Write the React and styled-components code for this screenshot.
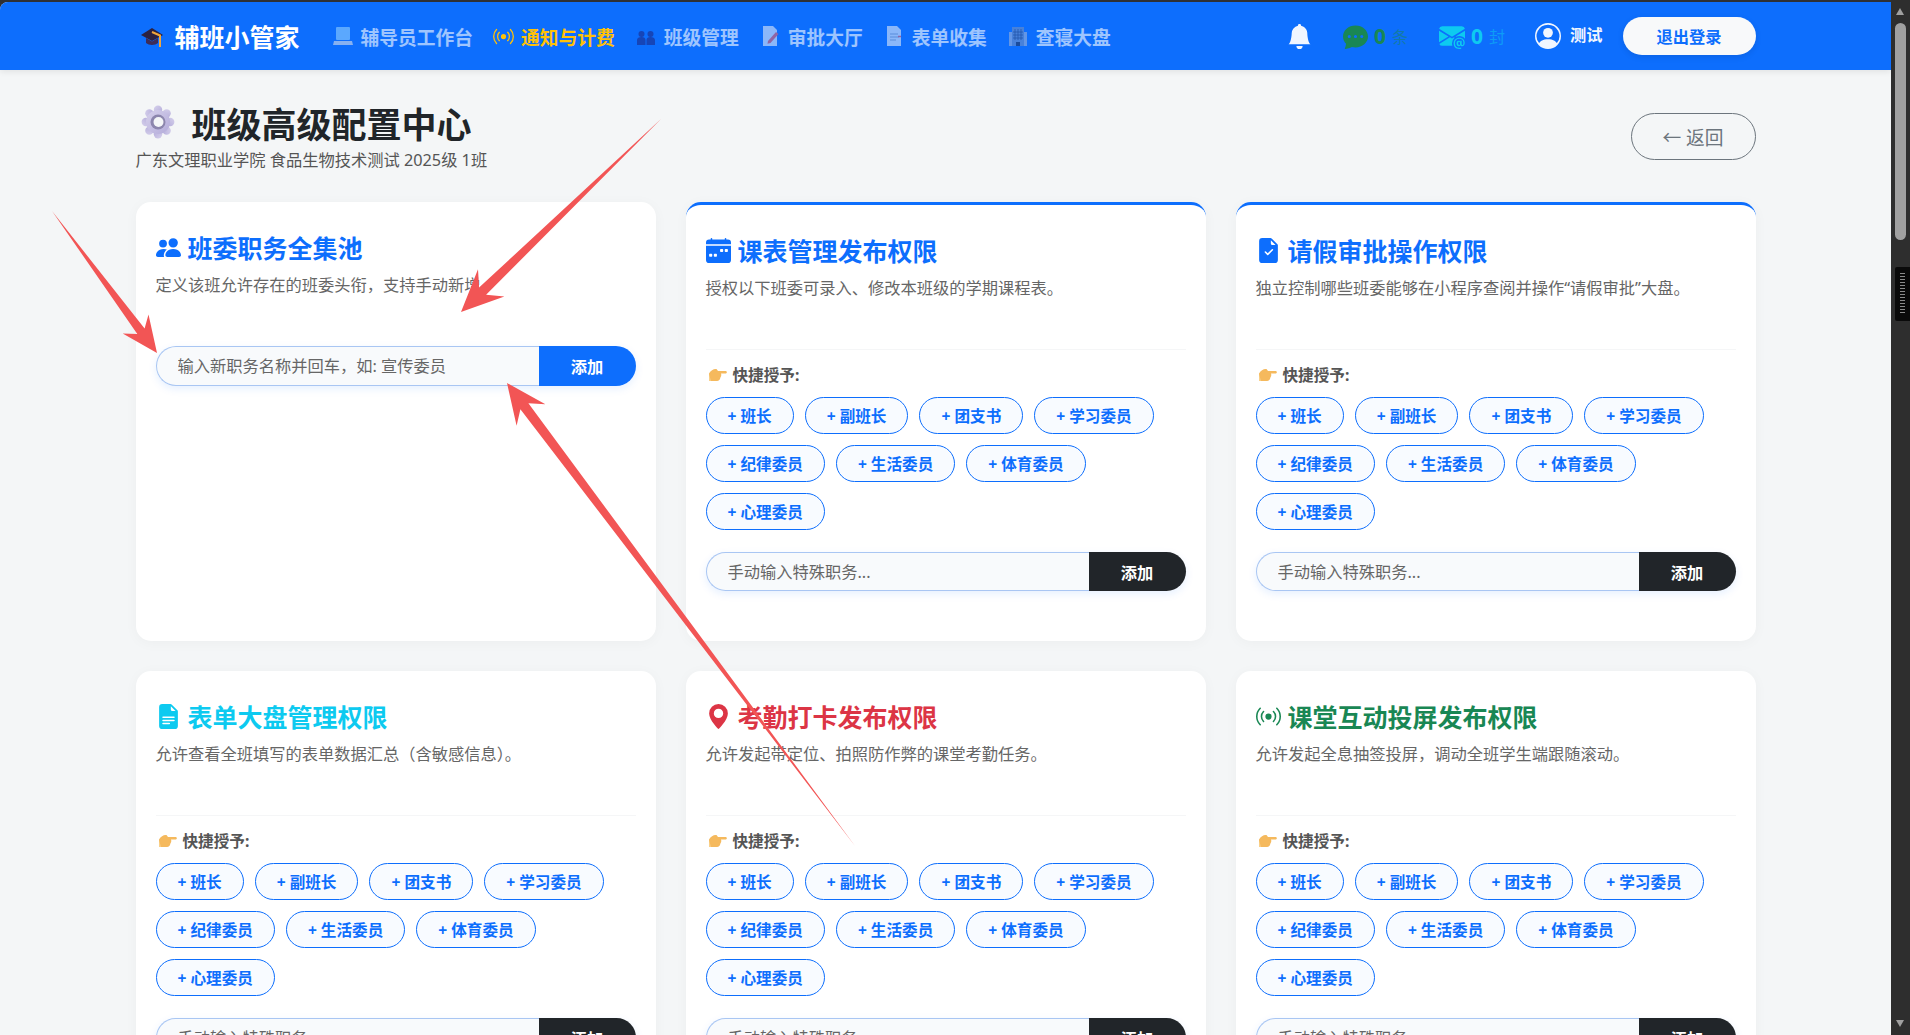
import React from 'react';
import styled, { createGlobalStyle } from 'styled-components';
import {
  BsBellFill, BsBroadcast, BsCalendarWeekFill, BsChatDotsFill, BsEnvelopeAtFill,
  BsFileEarmarkCheckFill, BsFileEarmarkTextFill, BsGeoAltFill, BsPeopleFill, BsPersonCircle,
} from 'react-icons/bs';

const Global = createGlobalStyle`
  html, body { margin: 0; padding: 0; height: 100%; overflow: hidden; background: #2e2e2e; }
  body { font-family: "Noto Sans", "Noto Sans CJK SC", sans-serif; color: #212529; }
  * { box-sizing: border-box; }
`;

const Frame = styled.div`
  display: flex; width: 1910px; height: 1035px; padding-top: 2px; background: #2e3034;
  position: relative; overflow: hidden;
`;
const Page = styled.main`
  flex: 1; min-width: 0; height: 100%; overflow: hidden; background: #f4f6f7; border-top-left-radius: 8px;
`;
const Track = styled.div`
  width: 19px; margin-top: -2px; background: #2e2e2e; position: relative; flex: none;
`;
const ArrowBtn = styled.div`
  width: 0; height: 0; position: absolute; left: 5px; border-left: 4.5px solid transparent; border-right: 4.5px solid transparent;
  ${p => p.$down ? 'bottom: 8px; border-top: 7px solid #a0a0a0;' : 'top: 8px; border-bottom: 7px solid #a0a0a0;'}
`;
const Thumb = styled.div`
  position: absolute; left: 4px; top: 23px; width: 11px; height: 217px; border-radius: 6px; background: #a0a0a0;
`;
const Widget = styled.div`
  position: absolute; left: 4px; top: 267px; width: 15px; height: 54px; background: #0a0a0a; border-radius: 2px 0 0 2px;
  display: flex; align-items: center; justify-content: center;
`;
const Ticks = styled.div`
  width: 5px; height: 42px; background: repeating-linear-gradient(#8a8a8a 0 1px, transparent 1px 3px);
`;

const Header = styled.header`
  height: 68px; background: #0d6efd; box-shadow: 0 2px 6px rgba(0,0,0,.08);
`;
const HeaderInner = styled.div`
  width: 1620px; height: 100%; margin: 0 auto; display: flex; align-items: center; padding-left: 3px; color: #fff;
`;
const Brand = styled.div`
  display: flex; align-items: center; gap: 10px; margin-right: 32px; font-size: 25px; font-weight: 700;
`;
const Nav = styled.nav`display: flex; align-items: center; gap: 20px;`;
const NavItem = styled.a`
  display: flex; align-items: center; gap: 7px; font-size: 18.75px; font-weight: 700; white-space: nowrap;
  color: ${p => p.$active ? '#ffc107' : '#fff'}; opacity: ${p => p.$active ? 1 : 0.6};
`;
const Right = styled.div`display: flex; align-items: center; margin-left: auto;`;
const Bell = styled.span`display: flex; font-size: 25px; color: #f1f6ff; margin-right: 31px;`;
const Counter = styled.div`
  display: flex; align-items: center; gap: 6px; color: ${p => p.$color}; margin-right: ${p => p.$mr}px;
`;
const Count = styled.b`font-size: 21px; line-height: 1;`;
const Unit = styled.span`font-size: 16px; opacity: .5;`;
const User = styled.div`
  display: flex; align-items: center; gap: 9px; font-size: 16.25px; font-weight: 700; margin-right: 20px; color: #f1f6ff;
`;
const UserName = styled.span`margin-top: -5px;`;
const Logout = styled.button`
  width: 133px; height: 38px; border: 0; border-radius: 19px; background: #f8f9fa; color: #0d6efd;
  font: 700 16.25px "Noto Sans", "Noto Sans CJK SC", sans-serif; box-shadow: 0 2px 6px rgba(0,0,0,.1);
`;

const Content = styled.div`width: 1620px; margin: 0 auto; padding-top: 30px;`;
const PageHead = styled.div`display: flex; align-items: center; justify-content: space-between; margin-bottom: 30px;`;
const TitleLine = styled.h1`
  display: flex; align-items: center; gap: 17px; margin: 0 0 4px; padding-left: 5px; height: 44px; font-size: 35px; font-weight: 700; color: #212529;
`;
const Sub = styled.div`font-size: 16.25px; line-height: 24px; color: #555; white-space: nowrap;`;
const Back = styled.button`
  width: 125px; height: 47px; border: 1.25px solid #6c757d; border-radius: 24px; background: transparent; color: #6c757d;
  font: 400 18.75px "Noto Sans", "Noto Sans CJK SC", sans-serif;
`;

const Grid = styled.div`display: grid; grid-template-columns: repeat(3, 1fr); gap: 30px;`;
const Card = styled.section`
  display: flex; flex-direction: column; padding: 28px 20px 50px; background: #fff; border-radius: 15px;
  box-shadow: 0 2px 14px rgba(0,0,0,.035);
  border-top: ${p => p.$bar ? '3px solid #0d6efd' : '0'};
`;
const CardTitle = styled.h2`
  display: flex; align-items: center; gap: 7px; height: 34px; margin: 0; font-size: 25px; font-weight: 700; color: ${p => p.$color}; white-space: nowrap;
`;
const TitleIcon = styled.span`display: flex; font-size: 25px;`;
const Desc = styled.p`
  height: 73px; margin: 9px 0 0; font-size: 16.25px; line-height: 24px; color: #666; white-space: nowrap;
`;
const Divider = styled.div`height: 1px; background: #f5f6f7; margin-bottom: 12px;`;
const Quick = styled.div`
  display: flex; align-items: center; gap: 6px; height: 24px; padding-left: 2px; margin-bottom: 11px;
  font-size: 15.6px; font-weight: 700; color: #555;
`;
const Chips = styled.div`display: flex; flex-wrap: wrap; gap: 11px 11px; margin-bottom: 22px;`;
const Chip = styled.button`
  height: 37px; padding: 0 21px; border: 1.25px solid #0d6efd; border-radius: 18.5px; background: #f8fbff; color: #0d6efd;
  font: 700 15.6px "Noto Sans", "Noto Sans CJK SC", sans-serif; white-space: nowrap;
`;
const InputGroup = styled.div`
  display: flex; height: ${p => p.$h}px; border-radius: 20px; box-shadow: 0 3px 8px rgba(13,110,253,.1);
`;
const TextInput = styled.input`
  flex: 1; min-width: 0; padding: 0 21px; border: 1.25px solid #a9c6f3; border-right: 0; border-radius: 20px 0 0 20px; background: #f8fafc; outline: 0;
  font: 400 16.25px "Noto Sans", "Noto Sans CJK SC", sans-serif; color: #212529;
  &::placeholder { color: #666; opacity: 1; }
`;
const AddBtn = styled.button`
  width: 97px; border: 0; border-radius: 0 20px 20px 0; background: ${p => p.$dark ? '#212529' : '#0d6efd'}; color: #fff;
  font: 700 16.25px "Noto Sans", "Noto Sans CJK SC", sans-serif;
`;
const Overlay = styled.svg`position: absolute; left: 0; top: 0; pointer-events: none;`;

const Cap = () => (
  <svg width="26" height="26" viewBox="0 0 26 26">
    <path d="M13 5 24 12 13 18 2 12Z" fill="#2c2140" />
    <path d="M7 15v5c3 2.5 9 2.5 12 0v-5l-6 3.4Z" fill="#3d2c58" />
    <path d="M13 9 21 12.5V24" fill="none" stroke="#f0a63c" strokeWidth="2" />
  </svg>
);
const Laptop = () => (
  <svg width="22" height="22" viewBox="0 0 22 22">
    <rect x="4" y="2" width="14" height="13" rx="1" fill="#8fd0ff" />
    <path d="M2 16h18l1 4H1Z" fill="#d8dee8" />
  </svg>
);
const Team = () => (
  <svg width="22" height="22" viewBox="0 0 22 22" fill="#1c2a8a">
    <circle cx="6.5" cy="9" r="3" /><circle cx="15.5" cy="9" r="3" />
    <path d="M2 20v-5c0-2 2-3 4.5-3s4 1 4 3v5Zm9.5 0v-5c0-2 1.6-3 4-3s4.500 1 4.500 3v5Z" />
  </svg>
);
const Memo = () => (
  <svg width="22" height="22" viewBox="0 0 22 22">
    <path d="M4 1h10l4 4v16H4Z" fill="#dfe8f7" />
    <path d="M9 16 17 7l2.500 2-8 9-3 .8Z" fill="#e8606a" />
  </svg>
);
const Doc = () => (
  <svg width="22" height="22" viewBox="0 0 22 22">
    <path d="M4 1h10l4 4v16H4Z" fill="#dfe8f7" />
    <path d="M7 9h8M7 12h9M7 15h6" stroke="#8da2c6" strokeWidth="1.200" />
    <path d="M15 11.500h3" stroke="#e8606a" strokeWidth="1.500" />
  </svg>
);
const Building = () => (
  <svg width="22" height="22" viewBox="0 0 22 22">
    <rect x="5" y="2" width="12" height="19" fill="#6f8fc4" />
    <rect x="2" y="7" width="3" height="14" fill="#9db2d6" /><rect x="17" y="7" width="3" height="14" fill="#9db2d6" />
    <path d="M8 4v11M11 4v11M14 4v11M6 7h10M6 10h10M6 13h10" stroke="#31467a" strokeWidth=".8" />
    <rect x="9" y="17" width="4" height="4" fill="#24365f" />
  </svg>
);
const Gear = () => {
  const petals = [0, 45, 90, 135, 180, 225, 270, 315];
  return (
    <svg width="34" height="34" viewBox="0 0 34 34">
      <defs>
        <linearGradient id="gearFill" x1="0" y1="0" x2="1" y2="1">
          <stop offset="0" stopColor="#d6d1ec" /><stop offset="1" stopColor="#b3abd9" />
        </linearGradient>
      </defs>
      {petals.map(a => <circle key={a} cx="17" cy="4.800" r="4.200" fill="url(#gearFill)" transform={`rotate(${a} 17 17)`} />)}
      <circle cx="17" cy="17" r="12" fill="url(#gearFill)" />
      <circle cx="17" cy="17" r="7.500" fill="#8c86ad" />
      <circle cx="17.500" cy="17" r="5" fill="#f4f6f7" />
    </svg>
  );
};
const Pointing = () => (
  <svg width="19" height="17" viewBox="0 0 19 17">
    <path d="M1 7.500C3 4 6 2.500 8.500 3L10 5h7.500c1.800 0 1.800 2.500 0 2.500H13c.6 1.500.3 3-.6 4-.3 2-1.500 3.500-3.400 3.500H1Z" fill="#f5b95d" />
    <path d="M1 8 3 15H1Z" fill="#f9d08a" />
  </svg>
);

const Arrow = ({ s, t, len, head, neck, back }) => {
  const dx = t[0] - s[0], dy = t[1] - s[1];
  const d = Math.hypot(dx, dy), ux = dx / d, uy = dy / d, nx = -uy, ny = ux;
  const at = (along, off) => [t[0] - ux * along + nx * off, t[1] - uy * along + ny * off].map(v => v.toFixed(1)).join(',');
  const pts = [
    `${s[0]},${s[1]}`, at(back, neck / 2), at(len, head / 2), `${t[0]},${t[1]}`, at(len, -head / 2), at(back, -neck / 2),
  ].join(' ');
  return <polygon points={pts} fill="#f25555" />;
};

const roles = ['班长', '副班长', '团支书', '学习委员', '纪律委员', '生活委员', '体育委员', '心理委员'];
const navItems = [
  { icon: <Laptop />, label: '辅导员工作台' },
  { icon: <BsBroadcast size={21} />, label: '通知与计费', active: true },
  { icon: <Team />, label: '班级管理' },
  { icon: <Memo />, label: '审批大厅' },
  { icon: <Doc />, label: '表单收集' },
  { icon: <Building />, label: '查寝大盘' },
];
const cards = [
  { key: 'a', Icon: BsCalendarWeekFill, title: '课表管理发布权限', desc: '授权以下班委可录入、修改本班级的学期课程表。', color: '#0d6efd', bar: true },
  { key: 'b', Icon: BsFileEarmarkCheckFill, title: '请假审批操作权限', desc: '独立控制哪些班委能够在小程序查阅并操作“请假审批”大盘。', color: '#0d6efd', bar: true },
  { key: 'c', Icon: BsFileEarmarkTextFill, title: '表单大盘管理权限', desc: '允许查看全班填写的表单数据汇总（含敏感信息）。', color: '#0dcaf0' },
  { key: 'd', Icon: BsGeoAltFill, title: '考勤打卡发布权限', desc: '允许发起带定位、拍照防作弊的课堂考勤任务。', color: '#dc3545' },
  { key: 'e', Icon: BsBroadcast, title: '课堂互动投屏发布权限', desc: '允许发起全息抽签投屏，调动全班学生端跟随滚动。', color: '#198754' },
];

export default function App() {
  return (
    <>
      <Global />
      <Frame>
        <Page>
          <Header>
            <HeaderInner>
              <Brand><Cap />辅班小管家</Brand>
              <Nav>
                {navItems.map(n => <NavItem key={n.label} $active={n.active}>{n.icon}{n.label}</NavItem>)}
              </Nav>
              <Right>
                <Bell><BsBellFill /></Bell>
                <Counter $color="#198754" $mr={31}><BsChatDotsFill size={25} /><Count>0</Count><Unit>条</Unit></Counter>
                <Counter $color="#0dcaf0" $mr={30}><BsEnvelopeAtFill size={26} /><Count>0</Count><Unit>封</Unit></Counter>
                <User><BsPersonCircle size={26} /><UserName>测试</UserName></User>
                <Logout>退出登录</Logout>
              </Right>
            </HeaderInner>
          </Header>
          <Content>
            <PageHead>
              <div>
                <TitleLine><Gear />班级高级配置中心</TitleLine>
                <Sub>广东文理职业学院 食品生物技术测试 2025级 1班</Sub>
              </div>
              <Back>← 返回</Back>
            </PageHead>
            <Grid>
              <Card>
                <CardTitle $color="#0d6efd"><TitleIcon><BsPeopleFill /></TitleIcon>班委职务全集池</CardTitle>
                <Desc>定义该班允许存在的班委头衔，支持手动新增。</Desc>
                <InputGroup $h={40}>
                  <TextInput placeholder="输入新职务名称并回车，如: 宣传委员" />
                  <AddBtn>添加</AddBtn>
                </InputGroup>
              </Card>
              {cards.map(c => (
                <Card key={c.key} $bar={c.bar}>
                  <CardTitle $color={c.color}><TitleIcon><c.Icon /></TitleIcon>{c.title}</CardTitle>
                  <Desc>{c.desc}</Desc>
                  <Divider />
                  <Quick><Pointing />快捷授予:</Quick>
                  <Chips>{roles.map(r => <Chip key={r}>+ {r}</Chip>)}</Chips>
                  <InputGroup $h={39}>
                    <TextInput placeholder="手动输入特殊职务..." />
                    <AddBtn $dark>添加</AddBtn>
                  </InputGroup>
                </Card>
              ))}
            </Grid>
          </Content>
        </Page>
        <Track>
          <ArrowBtn />
          <Thumb />
          <Widget><Ticks /></Widget>
          <ArrowBtn $down />
        </Track>
        <Overlay width="1910" height="1035" viewBox="0 0 1910 1035">
          <Arrow s={[52, 211]} t={[157, 353]} len={36} head={32} neck={9} back={27} />
          <Arrow s={[661, 119]} t={[461, 312]} len={42} head={38} neck={10} back={30} />
          <Arrow s={[855, 846]} t={[507, 383]} len={40} head={36} neck={10} back={29} />
        </Overlay>
      </Frame>
    </>
  );
}
